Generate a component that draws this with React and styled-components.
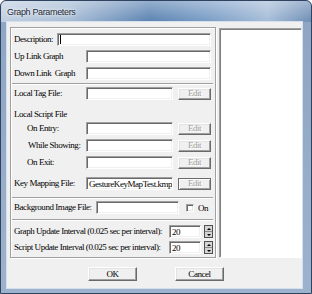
import React from 'react';
import styled, { createGlobalStyle } from 'styled-components';

const Global = createGlobalStyle`
  html, body { margin: 0; padding: 0; background: #ffffff; }
  body { width: 312px; height: 294px; overflow: hidden; }
  *, *::before, *::after { box-sizing: border-box; }
`;

const Window = styled.div`
  width: 312px;
  height: 294px;
  border: 1px solid #2f4260;
  border-radius: 6px 6px 0 0;
  background:
    linear-gradient(to bottom, transparent 21px, #8ea6c4 21px, #9db2cc 100%),
    linear-gradient(to bottom, rgba(255,255,255,0.35), rgba(255,255,255,0) 20px),
    linear-gradient(to right, #c0cfe1 0%, #a8bdd6 22%, #5c84b2 48%, #7ea0c8 68%, #a6bdd8 86%, #6f8fb6 100%);
  display: flex;
  flex-direction: column;
  padding: 0 9px 5px 6px;
  overflow: hidden;
`;

const TitleBar = styled.div`
  height: 21px;
  flex: none;
  display: flex;
  align-items: center;
  padding-top: 1px;
  font-family: "Liberation Sans", Arial, sans-serif;
  font-size: 9px;
  letter-spacing: -0.35px;
  color: #1c2636;
  text-shadow: 0 0 5px rgba(255,255,255,0.95), 0 0 2px rgba(255,255,255,0.9);
`;

const Client = styled.div`
  flex: 1;
  background: #f0f0f0;
  box-shadow: 0 0 0 1px #d5e0ec;
  display: flex;
  flex-direction: column;
  padding: 5px 0 0 3px;
  font-family: "Liberation Serif", "Times New Roman", serif;
  font-size: 9px;
  letter-spacing: -0.45px;
  color: #000;
`;

const Main = styled.div`
  display: flex;
  gap: 3px;
  align-items: flex-start;
`;

const Group = styled.div`
  width: 206px;
  height: 231px;
  flex: none;
  border: 1px solid #a0a0a0;
  box-shadow: inset 1px 1px 0 #ffffff, 1px 1px 0 #ffffff;
  padding: 0 4px 0 3px;
  display: flex;
  flex-direction: column;
`;

const ListPanel = styled.div`
  width: 83px;
  height: 230px;
  margin-top: 1px;
  flex: none;
  background: #ffffff;
  border: 1px solid;
  border-color: #a0a0a0 #ffffff #ffffff #a0a0a0;
  box-shadow: inset 1px 1px 0 #808080;
`;

const Row = styled.div`
  display: flex;
  align-items: center;
  height: 13px;
  flex: none;
  margin-top: ${p => p.$mt}px;
`;

const Label = styled.div`
  width: ${p => p.$w}px;
  flex: none;
  padding-left: ${p => p.$indent || 0}px;
  white-space: pre;
  padding-bottom: 1px;
`;

const Field = styled.div`
  height: 13px;
  flex: ${p => (p.$w ? 'none' : '1')};
  width: ${p => (p.$w ? `${p.$w}px` : 'auto')};
  min-width: 0;
  display: flex;
  align-items: center;
  padding-left: 2px;
  background: #ffffff;
  border: 1px solid;
  border-color: #a0a0a0 #ffffff #ffffff #a0a0a0;
  box-shadow: inset 1px 1px 0 #696969, inset -1px -1px 0 #f0f0f0;
  white-space: nowrap;
  overflow: hidden;
`;

const Caret = styled.span`
  display: inline-block;
  width: 1px;
  height: 9px;
  background: #000;
  margin-left: 0;
`;

const EditButton = styled.div`
  width: 33px;
  height: 12px;
  flex: none;
  margin-left: 5px;
  display: flex;
  align-items: center;
  justify-content: center;
  background: #f0f0f0;
  border: 1px solid;
  border-color: ${p => (p.$framed ? '#696969' : '#ffffff #696969 #696969 #ffffff')};
  box-shadow: ${p => (p.$framed
    ? 'inset 1px 1px 0 #ffffff, inset -1px -1px 0 #a0a0a0'
    : 'inset -1px -1px 0 #a0a0a0, inset 1px 1px 0 #e3e3e3')};
  color: #a0a0a0;
  text-shadow: 1px 1px 0 #ffffff;
  padding-bottom: 1px;
`;

const Separator = styled.div`
  height: 2px;
  flex: none;
  margin: ${p => p.$mt}px -2px 0 -2px;
  border-top: 1px solid #a0a0a0;
  border-bottom: 1px solid #ffffff;
`;

const CheckWrap = styled.div`
  width: 32px;
  flex: none;
  display: flex;
  align-items: center;
  gap: 4px;
  padding-left: 7px;
`;

const CheckBox = styled.span`
  width: 8px;
  height: 8px;
  flex: none;
  background: #ffffff;
  border: 1px solid;
  border-color: #a0a0a0 #ffffff #ffffff #a0a0a0;
  box-shadow: inset 1px 1px 0 #696969, inset -1px -1px 0 #e3e3e3;
`;

const Spinner = styled.div`
  width: 9px;
  height: 13px;
  flex: none;
  margin-left: 3px;
  display: flex;
  flex-direction: column;
  border: 1px solid #505050;
  background: #d4d4d4;
`;

const SpinHalf = styled.div`
  flex: 1;
  display: flex;
  align-items: center;
  justify-content: center;
  border-top: ${p => (p.$down ? '1px solid #8a8a8a' : 'none')};
  &::after {
    content: '';
    width: 0;
    height: 0;
    border-left: 2px solid transparent;
    border-right: 2px solid transparent;
    ${p => (p.$down ? 'border-top: 2px solid #000;' : 'border-bottom: 2px solid #000;')}
  }
`;

const ButtonRow = styled.div`
  display: flex;
  gap: 38px;
  margin-top: 9px;
  padding-left: 78px;
`;

const PushButton = styled.div`
  width: 49px;
  height: 14px;
  display: flex;
  align-items: center;
  justify-content: center;
  background: #f0f0f0;
  border: 1px solid;
  border-color: #ffffff #696969 #696969 #ffffff;
  box-shadow: inset -1px -1px 0 #a0a0a0, inset 1px 1px 0 #e3e3e3;
  padding-bottom: 1px;
`;

function FileRow({ label, mt, indent, value, framed }) {
  return (
    <Row $mt={mt}>
      <Label $w={72} $indent={indent}>{label}</Label>
      <Field>{value}</Field>
      <EditButton $framed={framed}>Edit</EditButton>
    </Row>
  );
}

function SpinRow({ label, mt }) {
  return (
    <Row $mt={mt}>
      <Label $w={155}>{label}</Label>
      <Field $w={32}>20</Field>
      <Spinner>
        <SpinHalf />
        <SpinHalf $down />
      </Spinner>
    </Row>
  );
}

export default function App() {
  return (
    <>
      <Global />
      <Window>
        <TitleBar>Graph Parameters</TitleBar>
        <Client>
          <Main>
            <Group>
              <Row $mt={5}>
                <Label $w={43}>Description:</Label>
                <Field><Caret /></Field>
              </Row>
              <Row $mt={4}>
                <Label $w={72}>Up Link Graph</Label>
                <Field />
              </Row>
              <Row $mt={4}>
                <Label $w={72}>{'Down Link  Graph'}</Label>
                <Field />
              </Row>
              <Separator $mt={3} />
              <FileRow mt={2} label="Local Tag File:" />
              <Row $mt={8}>
                <Label $w={120}>Local Script File</Label>
              </Row>
              <FileRow mt={1} indent={13} label="On Entry:" />
              <FileRow mt={4} indent={14} label="While Showing:" />
              <FileRow mt={4} indent={13} label="On Exit:" />
              <FileRow mt={8} label="Key Mapping File:" value="GestureKeyMapTest.kmp" framed />
              <Separator $mt={7} />
              <Row $mt={2}>
                <Label $w={82}>Background Image File:</Label>
                <Field />
                <CheckWrap>
                  <CheckBox />
                  <span>On</span>
                </CheckWrap>
              </Row>
              <Separator $mt={5} />
              <SpinRow mt={4} label="Graph Update Interval (0.025 sec per interval):" />
              <SpinRow mt={3} label="Script Update Interval (0.025 sec per interval):" />
            </Group>
            <ListPanel />
          </Main>
          <ButtonRow>
            <PushButton>OK</PushButton>
            <PushButton>Cancel</PushButton>
          </ButtonRow>
        </Client>
      </Window>
    </>
  );
}
